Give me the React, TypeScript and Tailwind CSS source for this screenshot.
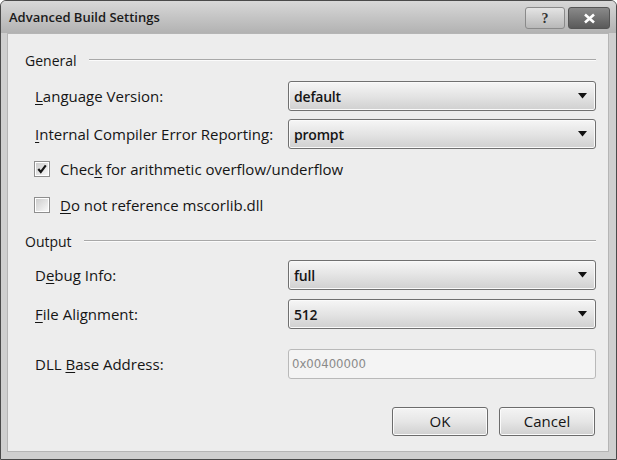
import React from "react";

const font = { fontFamily: '"Open Sans", "Noto Sans", "Liberation Sans", sans-serif' };

function U({ children }: { children: React.ReactNode }) {
  return <span className="underline underline-offset-2 decoration-1">{children}</span>;
}

function Dropdown({ value }: { value: string }) {
  return (
    <div className="w-[308px] h-[30px] rounded-[3px] border border-[#707070] bg-gradient-to-b from-[#f6f6f6] via-[#e4e4e4] to-[#d0d0d0] shadow-[inset_0_0_0_1px_#fafafa] flex items-center justify-between pl-[5px] pr-[8px]">
      <span className="text-[14px] font-semibold text-[#151515] tracking-[-0.2px]">{value}</span>
      <svg width="9" height="6" viewBox="0 0 9 6">
        <path d="M0 0 H9 L4.5 5.5 Z" fill="#111" />
      </svg>
    </div>
  );
}

function SectionHeader({ title }: { title: string }) {
  return (
    <div className="h-[20px] flex items-center pl-[17px] pr-[12px]">
      <span className="text-[14px] text-[#151515] mr-[12px]">{title}</span>
      <div className="flex-1 h-[2px] border-t border-[#a8a8a8] border-b border-b-[#fbfbfb]" />
    </div>
  );
}

function Checkbox({ checked, children }: { checked: boolean; children: React.ReactNode }) {
  return (
    <div className="h-[24px] flex items-center pl-[26px]">
      <div className="w-[16px] h-[16px] border border-[#8e8e8e] bg-white flex items-center justify-center">
        <div className="w-[12px] h-[12px] bg-gradient-to-br from-[#cdcdcd] to-[#f8f8f8] flex items-center justify-center">
          {checked && (
            <svg width="12" height="12" viewBox="0 0 12 12">
              <path d="M2.3 6 L4.8 9 L9.8 2.3" stroke="#151515" strokeWidth="2.1" fill="none" />
            </svg>
          )}
        </div>
      </div>
      <span className="ml-[10px] text-[15px] text-[#151515]">{children}</span>
    </div>
  );
}

function Row({ label, children }: { label: React.ReactNode; children: React.ReactNode }) {
  return (
    <div className="flex items-center h-[30px] pl-[27px]">
      <div className="w-[253px] text-[15px] text-[#151515]">{label}</div>
      {children}
    </div>
  );
}

function Button({ children }: { children: React.ReactNode }) {
  return (
    <div className="h-[29px] w-[96px] rounded-[3px] border border-[#6c6c6c] bg-gradient-to-b from-[#f4f4f4] via-[#e6e6e6] to-[#d0d0d0] shadow-[inset_0_0_0_1px_#fbfbfb] flex items-center justify-center text-[15px] text-[#151515]">
      {children}
    </div>
  );
}

export default function App() {
  return (
    <div style={font} className="w-[617px] h-[460px] bg-[#cfcfcf] border border-[#4a4a4a] rounded-t-[6px] flex flex-col overflow-hidden">
      {/* Title bar */}
      <div className="h-[32px] shrink-0 flex items-start justify-between bg-gradient-to-b from-[#d8d8d8] to-[#b2b2b2] pl-[8px] pr-[6px]">
        <span className="mt-[7px] text-[13px] font-semibold text-[#1a1a1a]">Advanced Build Settings</span>
        <div className="flex mt-[6px] gap-[3px]">
          <div className="w-[40px] h-[22px] rounded-[3px] border border-[#8a8a8a] bg-gradient-to-b from-[#e4e4e4] to-[#b8b8b8] flex items-center justify-center text-[14px] font-bold text-[#333]" style={{ fontFamily: '"Liberation Serif", serif' }}>
            ?
          </div>
          <div className="w-[42px] h-[22px] rounded-[3px] border border-[#555] bg-gradient-to-b from-[#8a8a8a] to-[#5a5a5a] flex items-center justify-center">
            <svg width="13" height="11" viewBox="0 0 13 11">
              <path d="M2 1.5 L11 9.5 M11 1.5 L2 9.5" stroke="#fff" strokeWidth="2.6" />
            </svg>
          </div>
        </div>
      </div>
      {/* Client */}
      <div className="flex-1 ml-[6px] mr-[7px] mb-[7px] bg-[#ededed] border border-[#b5b5b5] flex flex-col pt-[16px]">
        <SectionHeader title="General" />
        <div className="mt-[11px]">
          <Row label={<><U>L</U>anguage Version:</>}>
            <Dropdown value="default" />
          </Row>
        </div>
        <div className="mt-[8px]">
          <Row label={<><U>I</U>nternal Compiler Error Reporting:</>}>
            <Dropdown value="prompt" />
          </Row>
        </div>
        <div className="mt-[8px]">
          <Checkbox checked>
            Chec<U>k</U> for arithmetic overflow/underflow
          </Checkbox>
        </div>
        <div className="mt-[12px]">
          <Checkbox checked={false}>
            <U>D</U>o not reference mscorlib.dll
          </Checkbox>
        </div>
        <div className="mt-[14px]">
          <SectionHeader title="Output" />
        </div>
        <div className="mt-[9px]">
          <Row label={<>D<U>e</U>bug Info:</>}>
            <Dropdown value="full" />
          </Row>
        </div>
        <div className="mt-[9px]">
          <Row label={<><U>F</U>ile Alignment:</>}>
            <Dropdown value="512" />
          </Row>
        </div>
        <div className="mt-[20px]">
          <Row label={<>DLL <U>B</U>ase Address:</>}>
            <div className="w-[308px] h-[30px] rounded-[3px] border border-[#b9b9b9] bg-[#f4f4f4] flex items-center pl-[3px] text-[13px] text-[#8a8a8a]" style={{ fontFamily: '"DejaVu Sans Condensed", "Liberation Sans Narrow", sans-serif' }}>
              0x00400000
            </div>
          </Row>
        </div>
        <div className="mt-[28px] flex justify-end gap-[11px] pr-[13px]">
          <Button>OK</Button>
          <Button>Cancel</Button>
        </div>
      </div>
    </div>
  );
}
